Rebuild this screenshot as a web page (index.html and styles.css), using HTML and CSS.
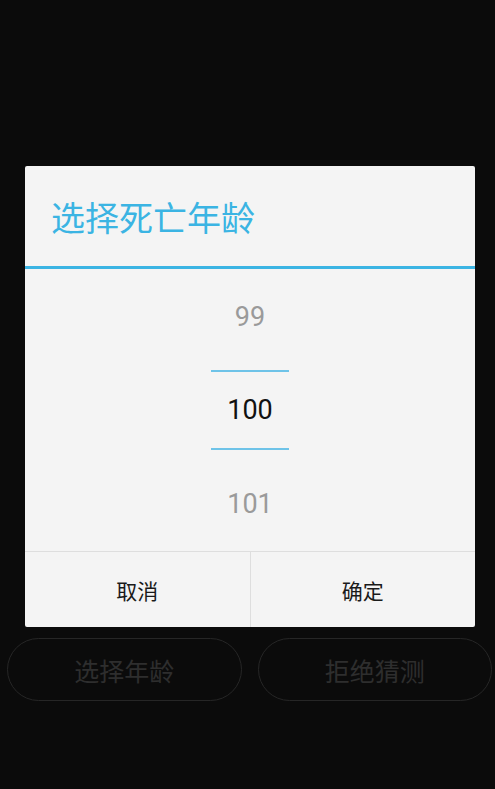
FILE: index.html
```html
<!DOCTYPE html>
<html lang="zh">
<head>
<meta charset="utf-8">
<link rel="stylesheet" href="styles.css">
</head>
<body>
<div class="page">
  <div class="spacer"></div>
  <div class="actions">
    <div class="pill">选择年龄</div>
    <div class="pill">拒绝猜测</div>
  </div>
</div>
<div class="dialog">
  <div class="dialog-header">
    <div class="dialog-title">选择死亡年龄</div>
  </div>
  <div class="picker">
    <div class="picker-item dim">99</div>
    <div class="picker-item current">100</div>
    <div class="picker-item dim">101</div>
  </div>
  <div class="dialog-buttons">
    <div class="dlg-btn">取消</div>
    <div class="dlg-btn">确定</div>
  </div>
</div>
</body>
</html>
```
FILE: styles.css
```css
html, body {
  margin: 0;
  padding: 0;
}
body {
  background: #0b0b0b;
  width: 495px;
  height: 789px;
  overflow: hidden;
  position: relative;
  font-family: "Noto Sans CJK SC", "Noto Sans", sans-serif;
}
.page {
  display: flex;
  flex-direction: column;
}
.spacer {
  height: 638px;
}
.actions {
  display: flex;
  gap: 16px;
  padding: 0 3px 0 7px;
}
.pill {
  flex: 1;
  height: 61px;
  border: 1px solid #262626;
  border-radius: 32px;
  display: flex;
  align-items: center;
  justify-content: center;
  color: #2e2e2e;
  font-size: 25px;
}
.dialog {
  position: absolute;
  left: 25px;
  top: 166px;
  width: 450px;
  height: 461px;
  background: #f4f4f4;
  border-radius: 2px;
  display: flex;
  flex-direction: column;
}
.dialog-header {
  height: 100px;
  border-bottom: 3px solid #3bb4e3;
  display: flex;
  align-items: center;
  padding-left: 26px;
}
.dialog-title {
  color: #3bb4e3;
  font-size: 34px;
  line-height: 1;
  padding-top: 2px;
}
.picker {
  height: 282px;
  display: flex;
  flex-direction: column;
  align-items: center;
  padding-top: 20px;
  box-sizing: border-box;
}
.picker-item {
  font-family: Roboto, "Noto Sans", sans-serif;
  font-size: 27px;
  height: 56px;
  width: 78px;
  display: flex;
  align-items: center;
  justify-content: center;
}
.picker-item.dim {
  color: #9a9a9a;
}
.picker-item.current {
  color: #111;
  margin: 25px 0 26px;
  height: 80px;
  border-top: 2px solid #6ec3e8;
  border-bottom: 2px solid #6ec3e8;
  box-sizing: border-box;
}
.dialog-buttons {
  flex: 1;
  display: flex;
  border-top: 1px solid #dedede;
}
.dlg-btn {
  flex: 1;
  display: flex;
  align-items: center;
  justify-content: center;
  font-size: 21px;
  color: #1a1a1a;
}
.dlg-btn + .dlg-btn {
  border-left: 1px solid #dedede;
}
```
